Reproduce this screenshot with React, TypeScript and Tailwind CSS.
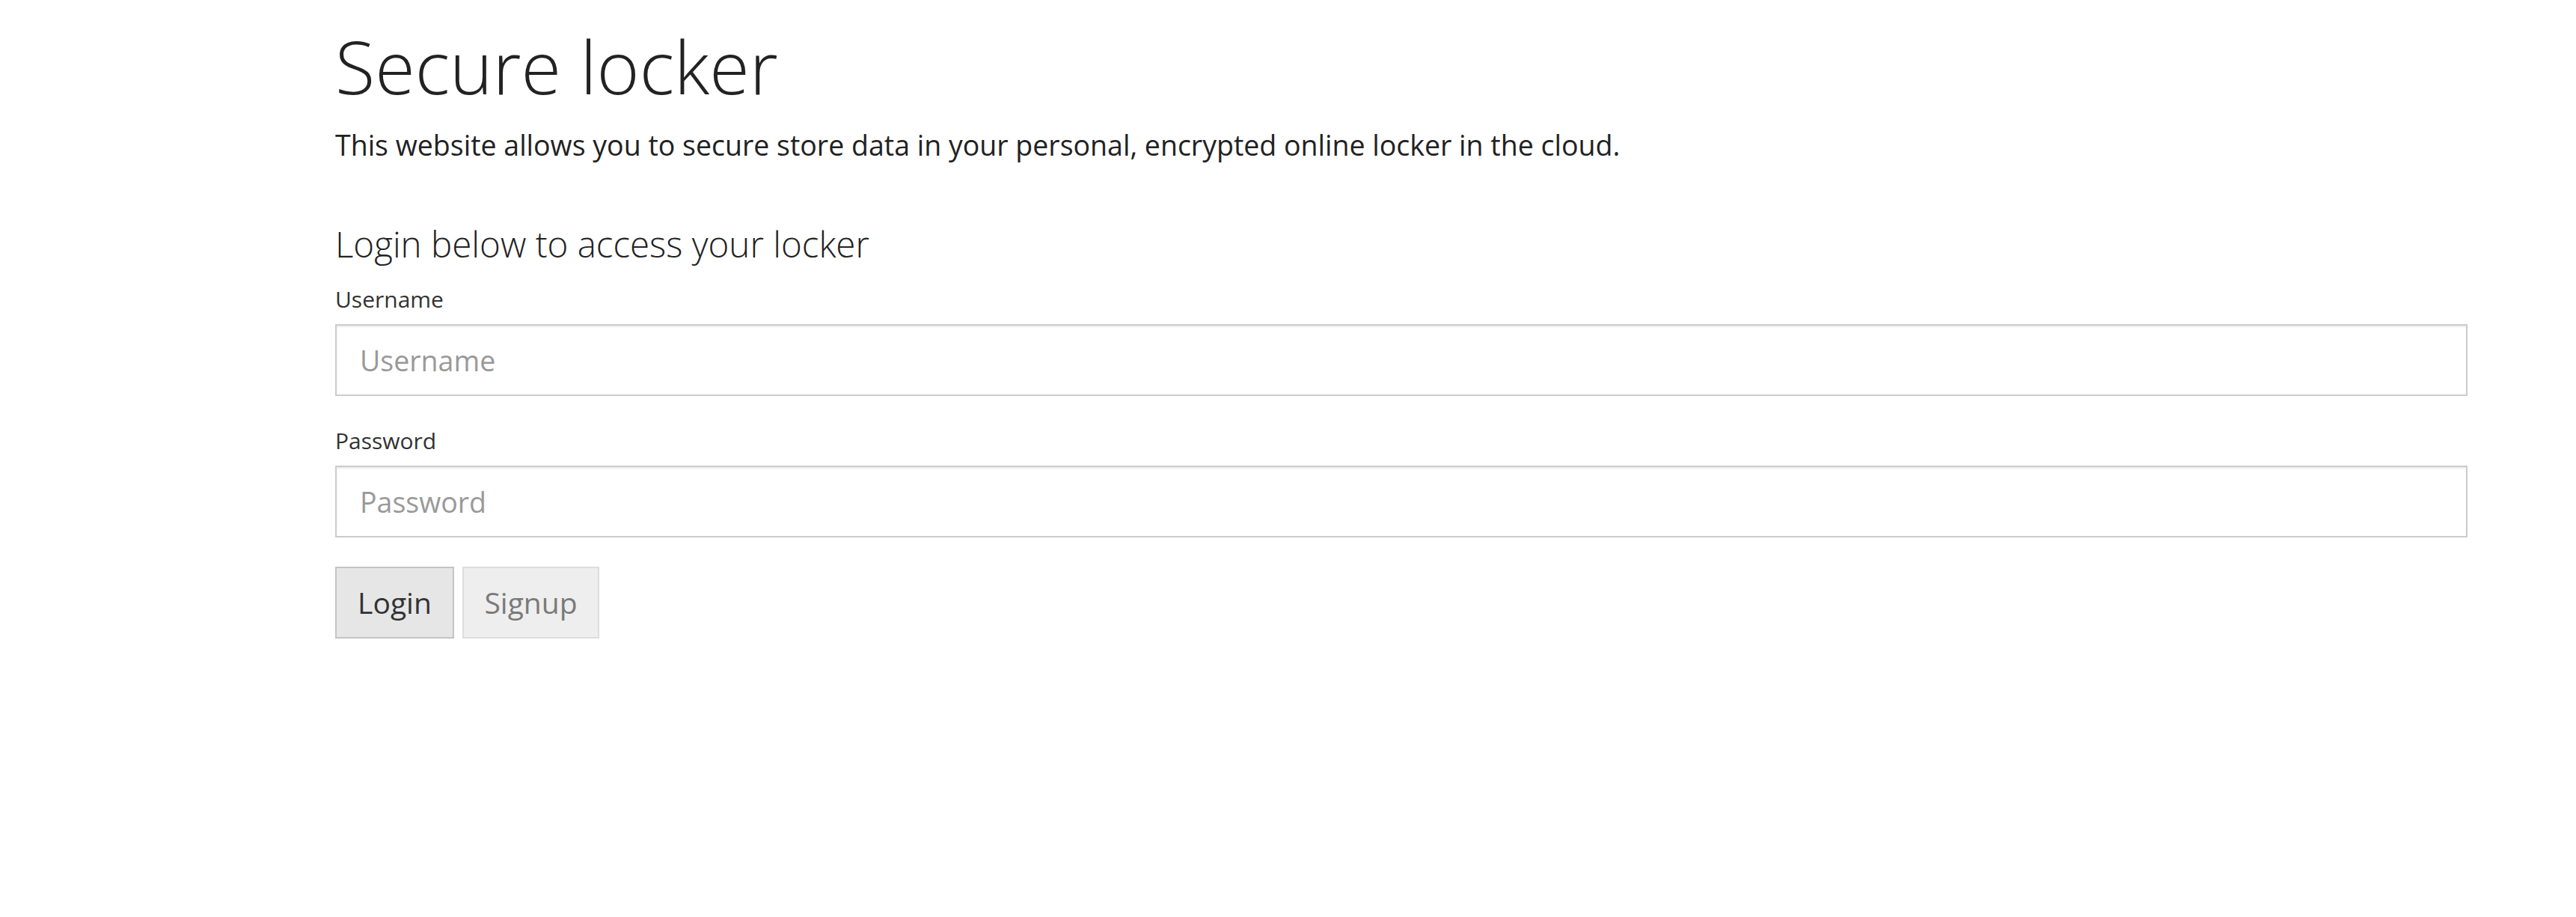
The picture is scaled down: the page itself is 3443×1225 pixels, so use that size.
const font = { fontFamily: '"Open Sans", "Noto Sans", sans-serif' };

const Field = ({
  label,
  type,
  className,
}: {
  label: string;
  type: string;
  className?: string;
}) => (
  <div className={className}>
    <label className="block text-[30px] leading-[45px] text-[#333]">{label}</label>
    <input
      type={type}
      placeholder={label}
      className="mt-[11px] block h-[96px] w-full border-2 border-[#cccccc] bg-white px-[31px] text-[37.5px] text-[#333] shadow-[inset_0_2px_2px_rgba(0,0,0,0.075)] outline-none placeholder:text-[#999]"
    />
  </div>
);

export default function App() {
  return (
    <div className="min-h-[1225px] bg-white" style={font}>
      <div className="ml-[448px] w-[2850px] pt-[34px]">
        <h1 className="text-[97.5px] font-light leading-[110px] text-[#222]">
          Secure locker
        </h1>
        <p className="mt-[23px] text-[37.5px] leading-[54px] text-[#222]">
          This website allows you to secure store data in your personal,
          encrypted online locker in the cloud.
        </p>

        <form className="mt-[79px]" onSubmit={(e) => e.preventDefault()}>
          <h2 className="text-[47.5px] font-light leading-[52px] text-[#222]">
            Login below to access your locker
          </h2>
          <Field label="Username" type="text" className="mt-[25px]" />
          <Field label="Password" type="password" className="mt-[37px]" />
          <div className="mt-[39px] flex gap-[11px]">
            <button
              type="submit"
              className="flex h-[96px] w-[159px] items-center justify-center border-2 border-[#c4c4c4] bg-[#e6e6e6] text-[39px] text-[#333]"
            >
              Login
            </button>
            <button
              type="button"
              className="flex h-[96px] w-[183px] items-center justify-center border-2 border-[#dddddd] bg-[#eeeeee] text-[39px] text-[#7a7a7a]"
            >
              Signup
            </button>
          </div>
        </form>
      </div>
    </div>
  );
}
